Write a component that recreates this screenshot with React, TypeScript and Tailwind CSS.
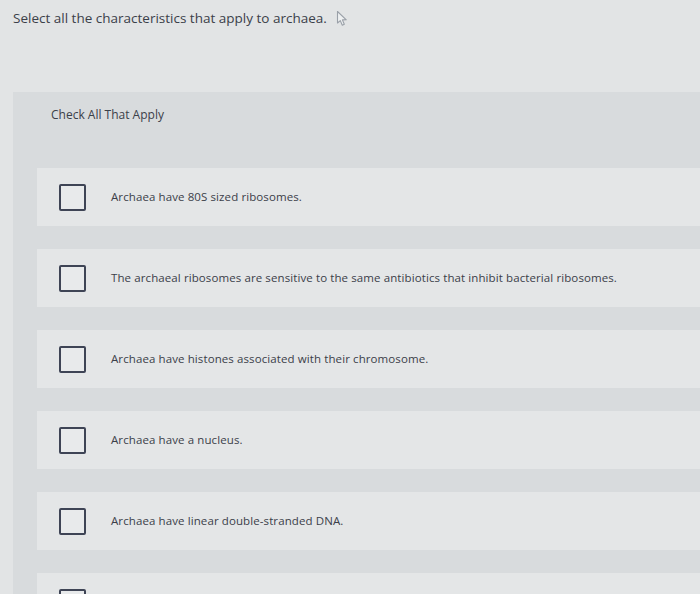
import React from "react";

const items = [
  "Archaea have 80S sized ribosomes.",
  "The archaeal ribosomes are sensitive to the same antibiotics that inhibit bacterial ribosomes.",
  "Archaea have histones associated with their chromosome.",
  "Archaea have a nucleus.",
  "Archaea have linear double-stranded DNA.",
  "",
];

function Cursor() {
  return (
    <svg width="14" height="18" viewBox="0 0 14 18" className="ml-[9px] mt-[2px]">
      <path
        d="M1.5 1.5 L1.5 13 L4.3 10.6 L6.3 15.2 L8.3 14.3 L6.4 9.9 L10.3 9.8 Z"
        fill="#eef0f1"
        stroke="#9aa0a8"
        strokeWidth="1.1"
        strokeLinejoin="round"
      />
    </svg>
  );
}

export default function App() {
  return (
    <div
      className="w-[700px] h-[594px] overflow-hidden bg-[#e2e4e5] text-[#3b4049]"
      style={{ fontFamily: "'Open Sans', Lato, sans-serif" }}
    >
      <div className="flex items-center pt-[10px] pl-[13px] h-[26px]">
        <span className="text-[13.5px] leading-[16px]">
          Select all the characteristics that apply to archaea.
        </span>
        <Cursor />
      </div>
      <div className="mt-[66px] ml-[13px] bg-[#d8dbdd] pb-[40px]">
        <div className="pt-[16px] pl-[38px] text-[12px] leading-[14px]">
          Check All That Apply
        </div>
        <div className="mt-[46px] pl-[24px] flex flex-col gap-[23px]">
          {items.map((t, i) => (
            <div key={i} className="h-[58px] bg-[#e4e6e7] flex items-center pl-[22px]">
              <div className="w-[27px] h-[27px] border-2 border-[#3e4455] rounded-[2px] bg-[#e8eaeb] shrink-0" />
              <span className="ml-[25px] text-[11.5px] tracking-[0.1px] leading-[14px] text-[#3b4049]">{t}</span>
            </div>
          ))}
        </div>
      </div>
    </div>
  );
}
